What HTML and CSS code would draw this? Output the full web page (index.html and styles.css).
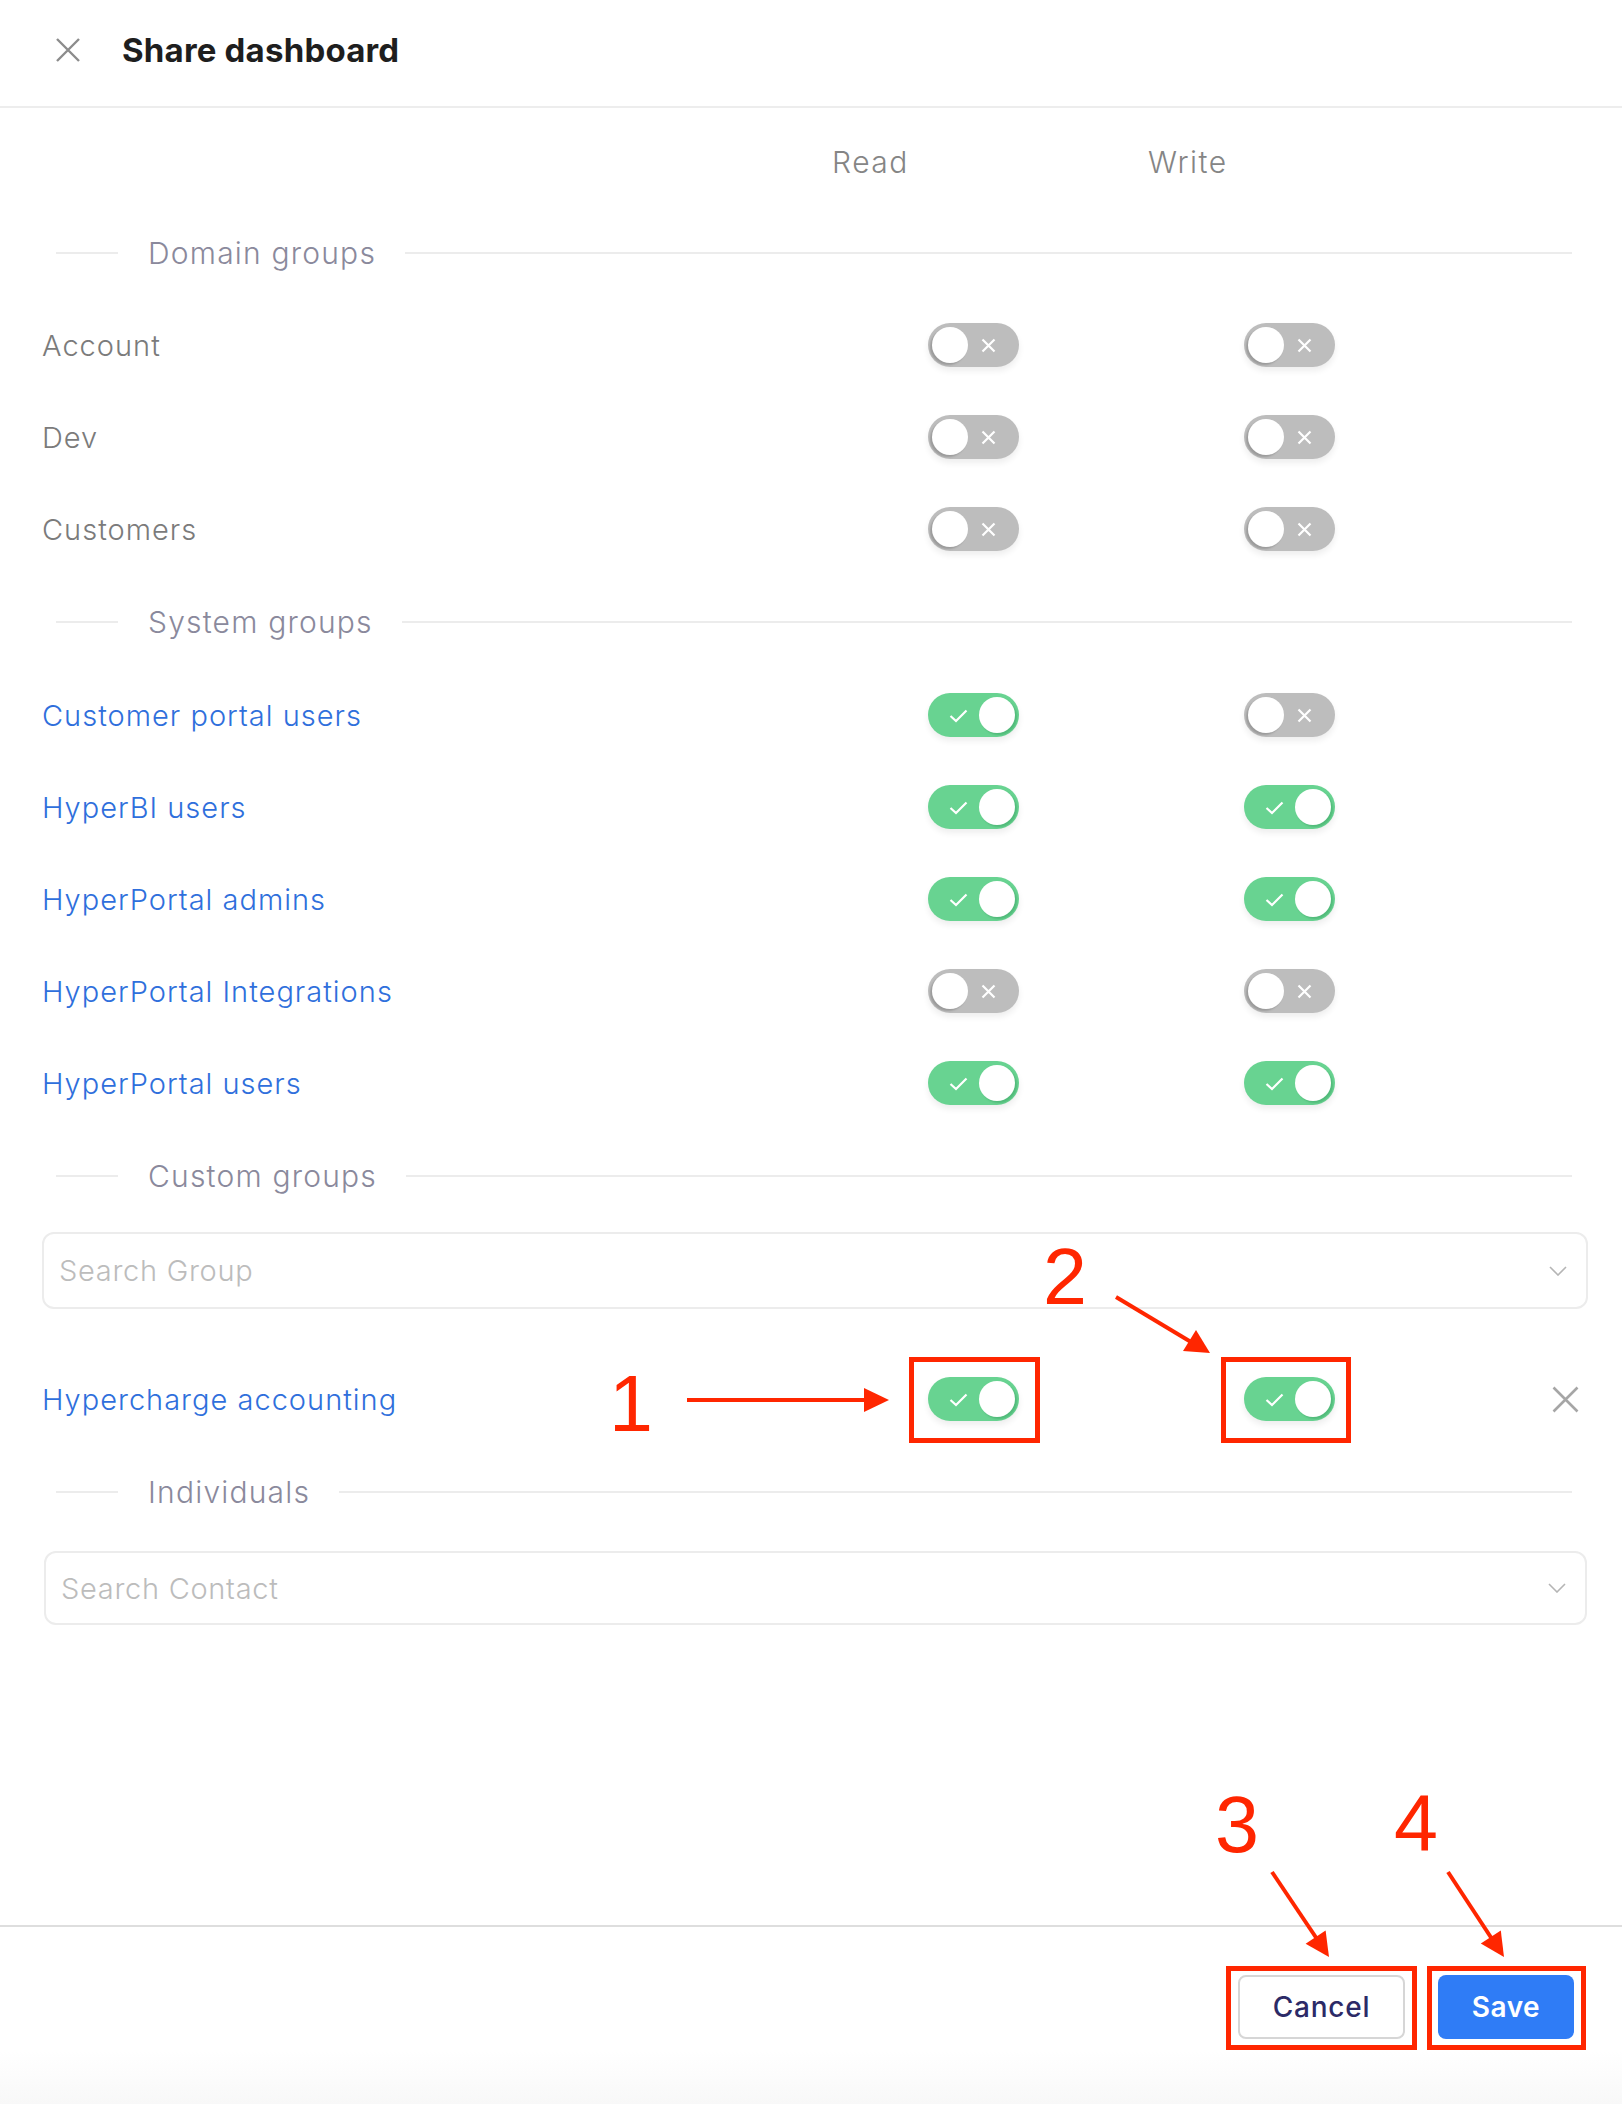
FILE: index.html
```html
<!DOCTYPE html>
<html lang="en">
<head>
<meta charset="utf-8">
<title>Share dashboard</title>
<link rel="stylesheet" href="styles.css">
</head>
<body>
<div class="page">
  <header class="topbar">
    <svg class="close" width="24" height="24" viewBox="0 0 24 24"><path d="M1 1L23 23M23 1L1 23" stroke="#8c8c8c" stroke-width="2.4" fill="none"/></svg>
    <h1 class="title">Share dashboard</h1>
  </header>

  <div class="grid colhead">
    <span></span>
    <span class="colname">Read</span>
    <span class="colname">Write</span>
  </div>

  <div class="divider first"><span class="pre"></span><span class="dtext">Domain groups</span><span class="post"></span></div>

  <div class="grid row"><span class="label">Account</span><span class="cell"><span class="toggle off"><span class="knob"></span><svg class="ico-x" viewBox="0 0 15 15"><path d="M1.5 1.5L13.5 13.5M13.5 1.5L1.5 13.5"/></svg></span></span><span class="cell"><span class="toggle off"><span class="knob"></span><svg class="ico-x" viewBox="0 0 15 15"><path d="M1.5 1.5L13.5 13.5M13.5 1.5L1.5 13.5"/></svg></span></span></div>
  <div class="grid row"><span class="label">Dev</span><span class="cell"><span class="toggle off"><span class="knob"></span><svg class="ico-x" viewBox="0 0 15 15"><path d="M1.5 1.5L13.5 13.5M13.5 1.5L1.5 13.5"/></svg></span></span><span class="cell"><span class="toggle off"><span class="knob"></span><svg class="ico-x" viewBox="0 0 15 15"><path d="M1.5 1.5L13.5 13.5M13.5 1.5L1.5 13.5"/></svg></span></span></div>
  <div class="grid row"><span class="label">Customers</span><span class="cell"><span class="toggle off"><span class="knob"></span><svg class="ico-x" viewBox="0 0 15 15"><path d="M1.5 1.5L13.5 13.5M13.5 1.5L1.5 13.5"/></svg></span></span><span class="cell"><span class="toggle off"><span class="knob"></span><svg class="ico-x" viewBox="0 0 15 15"><path d="M1.5 1.5L13.5 13.5M13.5 1.5L1.5 13.5"/></svg></span></span></div>

  <div class="divider"><span class="pre"></span><span class="dtext">System groups</span><span class="post"></span></div>

  <div class="grid row"><span class="label link">Customer portal users</span><span class="cell"><span class="toggle on"><svg class="ico-check" viewBox="0 0 19 15"><path d="M1.5 8L7 13L17.5 2.5"/></svg><span class="knob"></span></span></span><span class="cell"><span class="toggle off"><span class="knob"></span><svg class="ico-x" viewBox="0 0 15 15"><path d="M1.5 1.5L13.5 13.5M13.5 1.5L1.5 13.5"/></svg></span></span></div>
  <div class="grid row"><span class="label link">HyperBI users</span><span class="cell"><span class="toggle on"><svg class="ico-check" viewBox="0 0 19 15"><path d="M1.5 8L7 13L17.5 2.5"/></svg><span class="knob"></span></span></span><span class="cell"><span class="toggle on"><svg class="ico-check" viewBox="0 0 19 15"><path d="M1.5 8L7 13L17.5 2.5"/></svg><span class="knob"></span></span></span></div>
  <div class="grid row"><span class="label link">HyperPortal admins</span><span class="cell"><span class="toggle on"><svg class="ico-check" viewBox="0 0 19 15"><path d="M1.5 8L7 13L17.5 2.5"/></svg><span class="knob"></span></span></span><span class="cell"><span class="toggle on"><svg class="ico-check" viewBox="0 0 19 15"><path d="M1.5 8L7 13L17.5 2.5"/></svg><span class="knob"></span></span></span></div>
  <div class="grid row"><span class="label link">HyperPortal Integrations</span><span class="cell"><span class="toggle off"><span class="knob"></span><svg class="ico-x" viewBox="0 0 15 15"><path d="M1.5 1.5L13.5 13.5M13.5 1.5L1.5 13.5"/></svg></span></span><span class="cell"><span class="toggle off"><span class="knob"></span><svg class="ico-x" viewBox="0 0 15 15"><path d="M1.5 1.5L13.5 13.5M13.5 1.5L1.5 13.5"/></svg></span></span></div>
  <div class="grid row"><span class="label link">HyperPortal users</span><span class="cell"><span class="toggle on"><svg class="ico-check" viewBox="0 0 19 15"><path d="M1.5 8L7 13L17.5 2.5"/></svg><span class="knob"></span></span></span><span class="cell"><span class="toggle on"><svg class="ico-check" viewBox="0 0 19 15"><path d="M1.5 8L7 13L17.5 2.5"/></svg><span class="knob"></span></span></span></div>

  <div class="divider"><span class="pre"></span><span class="dtext">Custom groups</span><span class="post"></span></div>

  <div class="select select-group">
    <span class="placeholder">Search Group</span>
    <svg class="chev" width="18" height="10" viewBox="0 0 18 10"><path d="M1 1L9 9L17 1" fill="none" stroke="#b5b5b5" stroke-width="1.6"/></svg>
  </div>

  <div class="grid row custom-row"><span class="label link">Hypercharge accounting</span><span class="cell"><span class="toggle on"><svg class="ico-check" viewBox="0 0 19 15"><path d="M1.5 8L7 13L17.5 2.5"/></svg><span class="knob"></span></span></span><span class="cell"><span class="toggle on"><svg class="ico-check" viewBox="0 0 19 15"><path d="M1.5 8L7 13L17.5 2.5"/></svg><span class="knob"></span></span></span><span class="remove"><svg width="27" height="27" viewBox="0 0 27 27"><path d="M1.5 1.5L25.5 25.5M25.5 1.5L1.5 25.5" stroke="#a6a6a6" stroke-width="2.6" fill="none"/></svg></span></div>

  <div class="divider"><span class="pre"></span><span class="dtext">Individuals</span><span class="post"></span></div>

  <div class="select select-contact">
    <span class="placeholder">Search Contact</span>
    <svg class="chev" width="18" height="10" viewBox="0 0 18 10"><path d="M1 1L9 9L17 1" fill="none" stroke="#b5b5b5" stroke-width="1.6"/></svg>
  </div>

  <footer class="footer">
    <button class="btn btn-cancel">Cancel</button>
    <button class="btn btn-save">Save</button>
  </footer>

  <div class="annot">
    <div class="num n1">1</div>
    <div class="num n2">2</div>
    <div class="num n3">3</div>
    <div class="num n4">4</div>
    <svg class="annot-svg" width="1622" height="2104" viewBox="0 0 1622 2104">
      <g fill="none" stroke="#ff2600" stroke-width="5">
        <rect x="911.5" y="1359.5" width="126" height="81"/>
        <rect x="1223.5" y="1359.5" width="125" height="81"/>
        <rect x="1228.5" y="1968.5" width="186" height="79"/>
        <rect x="1429.5" y="1968.5" width="154" height="79"/>
      </g>
      <g stroke="#ff2600" stroke-width="4" fill="none">
        <line x1="687" y1="1400" x2="868" y2="1400"/>
        <line x1="1116" y1="1297" x2="1191" y2="1342"/>
        <line x1="1272" y1="1872" x2="1317" y2="1939"/>
        <line x1="1448" y1="1872" x2="1492" y2="1939"/>
      </g>
      <g fill="#ff2600">
        <polygon points="864,1388 889,1400 864,1412"/>
        <polygon points="1183,1351 1196,1330 1210,1353"/>
        <polygon points="1305.6,1943.8 1325.6,1930.4 1329,1957"/>
        <polygon points="1480.8,1943.6 1500.8,1930.4 1504,1957"/>
      </g>
    </svg>
  </div>
</div>
</body>
</html>
```

FILE: styles.css
```css
html, body {
  margin: 0;
  padding: 0;
  background: #ffffff;
}

body {
  font-family: "Inter", "Noto Sans", "Liberation Sans", sans-serif;
}

.page {
  position: relative;
  width: 1622px;
  min-height: 2104px;
  display: flex;
  flex-direction: column;
  overflow: hidden;
}

.topbar {
  height: 106px;
  box-sizing: content-box;
  border-bottom: 2px solid #ededed;
  display: flex;
  align-items: center;
  padding-left: 56px;
  gap: 42px;
}

.topbar-inner {
  display: flex;
}

.close {
  display: block;
  flex: none;
  margin-top: -6px;
}

.title {
  margin: -6px 0 0 0;
  font-size: 33px;
  font-weight: 700;
  color: #1e1e1e;
  letter-spacing: 0.2px;
}

.grid {
  display: grid;
  grid-template-columns: 790px 316px 316px 1fr;
  padding-left: 42px;
  align-items: center;
}

.colhead {
  height: 99px;
  padding-top: 8px;
  box-sizing: border-box;
}

.colname {
  font-size: 30px;
  font-weight: 300;
  letter-spacing: 1.5px;
  color: #858585;
}

.divider {
  height: 94px;
  display: flex;
  align-items: center;
  padding: 0 50px 0 56px;
}

.divider.first {
  height: 92px;
}

.divider .pre {
  width: 62px;
  height: 2px;
  background: #ececec;
  flex: none;
}

.divider .post {
  flex: 1;
  height: 2px;
  background: #ececec;
}

.dtext {
  padding: 0 29px 0 30px;
  font-size: 30px;
  font-weight: 300;
  letter-spacing: 1.2px;
  color: #8a899c;
}

.row {
  height: 92px;
}

.label {
  font-size: 29px;
  font-weight: 300;
  letter-spacing: 1px;
  color: #7b7b7b;
}

.label.link {
  color: #2f6fdc;
}

.cell {
  padding-left: 96px;
}

.toggle {
  position: relative;
  display: block;
  width: 91px;
  height: 44px;
  border-radius: 22px;
  box-shadow: 0 4px 6px rgba(0, 0, 0, 0.07);
}

.toggle.off {
  background: #bdbdbd;
}

.toggle.on {
  background: #68d391;
}

.knob {
  position: absolute;
  top: 4px;
  width: 36px;
  height: 36px;
  border-radius: 50%;
  background: #ffffff;
}

.off .knob {
  left: 4px;
  box-shadow: -2px 2px 2px rgba(0, 0, 0, 0.18);
}

.on .knob {
  right: 4px;
  box-shadow: 2px 2px 2px rgba(40, 140, 80, 0.35);
}

.ico-x {
  position: absolute;
  left: 53px;
  top: 15px;
  width: 15px;
  height: 15px;
  fill: none;
  stroke: #ffffff;
  stroke-width: 2.2;
}

.ico-check {
  position: absolute;
  left: 21px;
  top: 15px;
  width: 19px;
  height: 15px;
  fill: none;
  stroke: #ffffff;
  stroke-width: 2.2;
}

.select {
  box-sizing: border-box;
  border: 2px solid #ececec;
  border-radius: 12px;
  display: flex;
  align-items: center;
  justify-content: space-between;
  padding: 0 19px 0 15px;
}

.select-group {
  margin: 9px 34px 0 42px;
  height: 77px;
}

.select-contact {
  margin: 12px 35px 0 44px;
  height: 74px;
}

.placeholder {
  font-size: 29px;
  font-weight: 300;
  letter-spacing: 0.7px;
  color: #bcbcbc;
}

.chev {
  display: block;
}

.custom-row {
  margin-top: 44px;
}

.remove {
  padding-left: 88px;
  display: flex;
  align-items: center;
}

.remove svg {
  display: block;
}

.footer {
  margin-top: auto;
  height: 179px;
  box-sizing: border-box;
  border-top: 2px solid #dedede;
  display: flex;
  justify-content: flex-end;
  align-items: flex-start;
  gap: 33px;
  padding: 48px 48px 0 0;
  background: linear-gradient(#ffffff 0%, #ffffff 70%, #f8f8f8 100%);
}

.btn {
  font-family: "Inter", "Noto Sans", sans-serif;
  font-size: 28px;
  border-radius: 8px;
  cursor: pointer;
  box-sizing: border-box;
  height: 64px;
}

.btn-cancel {
  width: 167px;
  background: #ffffff;
  border: 2px solid #d6d6d6;
  color: #2c2a67;
  font-weight: 500;
  letter-spacing: 0.8px;
}

.btn-save {
  width: 136px;
  background: #2f7cf6;
  border: none;
  color: #ffffff;
  font-weight: 600;
  letter-spacing: 0.5px;
}

.annot {
  position: absolute;
  left: 0;
  top: 0;
  width: 1622px;
  height: 2104px;
  pointer-events: none;
}

.annot-svg {
  position: absolute;
  left: 0;
  top: 0;
}

.num {
  position: absolute;
  font-family: "Liberation Sans", Arial, sans-serif;
  font-size: 79px;
  line-height: 1;
  color: #ff2600;
}

.n1 { left: 609px; top: 1364px; }
.n2 { left: 1043px; top: 1237px; }
.n3 { left: 1215px; top: 1785px; }
.n4 { left: 1394px; top: 1783px; }
```
